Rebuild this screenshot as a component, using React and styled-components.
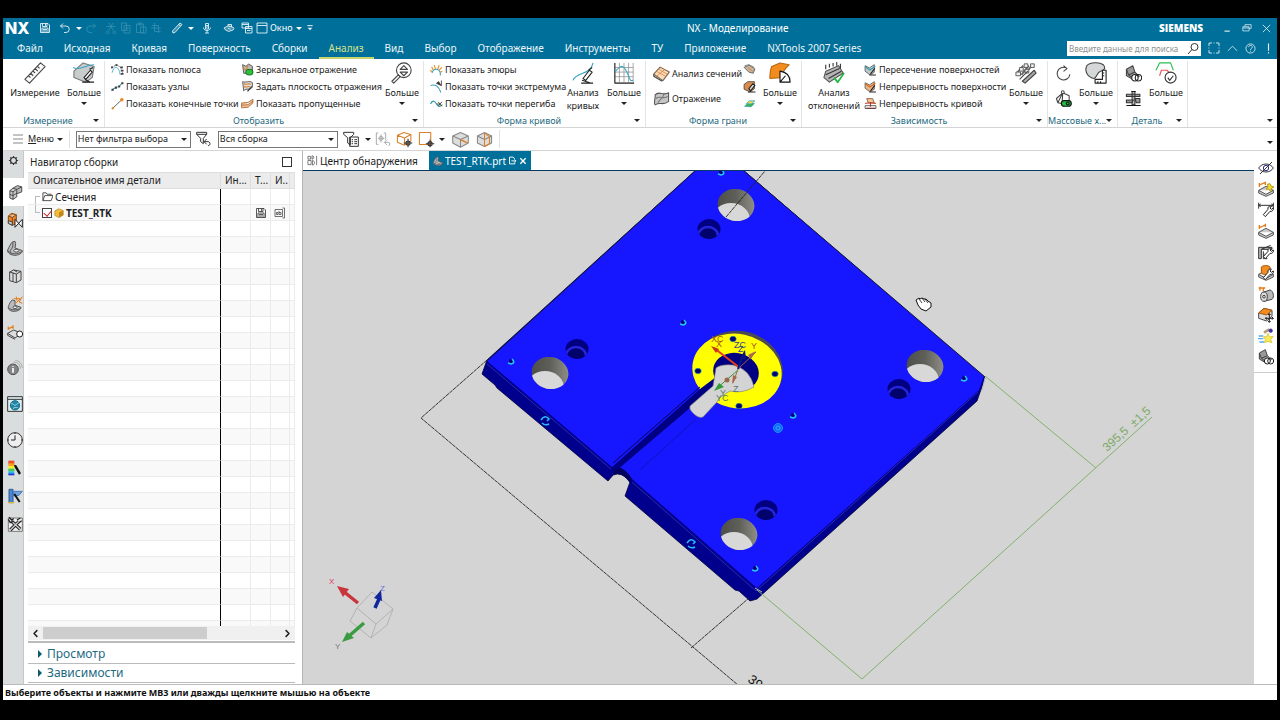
import styled, { createGlobalStyle, css } from 'styled-components';

const GlobalStyle = createGlobalStyle`
  :root {
    --teal: #00709a;
    --tealText: #1d6a80;
    --line: #d4d4d4;
    --scene: #d4d4d4;
  }

  * {
    box-sizing: border-box;
  }

  body {
    margin: 0;
    background: #000;
    color: #222;
    font-family: 'Noto Sans', 'Open Sans', sans-serif;
    font-size: 10px;
    line-height: 14px;
  }

  button,
  input,
  select {
    margin: 0;
    padding: 0;
    border: 0;
    background: none;
    color: inherit;
    font: inherit;
  }

  svg {
    display: block;
    flex: none;
  }
`;

/* ---------- icons ---------- */

const Svg = styled.svg.attrs({ viewBox: '0 0 24 24', fill: 'none', 'aria-hidden': true })`
  width: ${({ $size }) => $size}px;
  height: ${({ $size }) => $size}px;
  stroke: currentColor;
  stroke-width: ${({ $weight }) => $weight || 1.5};
  stroke-linejoin: round;
`;

const Caret = styled.span`
  flex: none;
  width: 0;
  height: 0;
  border: 3px solid transparent;
  border-bottom: 0;
  border-top-color: currentColor;
`;

const wrench = <path d="M11 22l7-8a4 4 0 0 0 5-5l-3 2-2-2 2-3a4 4 0 0 0-5 5l-7 8z" fill="#fff" stroke="#222" />;
const slab = <path d="M1 14l11-6 11 6-11 6zM1 14v4l11 5 11-5v-4" fill="#ccc" stroke="#555" />;
const clamp = (
  <>
    <path d="M2 6l9-5 3 9 6 6-8 5-10-6z" fill="#999" stroke="#444" />
    <path d="M2 6l3 8 8 6M5 14l9-4" stroke="#444" />
    <circle cx="14" cy="18" r="4.5" fill="#fff" stroke="#222" />
    <circle cx="19" cy="18" r="4.5" stroke="#222" />
  </>
);

const shapes = {
  save: <path d="M3 3h15l3 3v15H3zM7 3v6h9V3M13 4v4M6 21v-9h12v9M8 15h8M8 18h8" />,
  undo: <path d="M8 3L3 8l5 5M3 8h11a6 6 0 0 1 0 13h-4" />,
  redo: <path d="M16 3l5 5-5 5M21 8H10a6 6 0 0 0 0 13h4" />,
  cut: <path d="M8 2l8 14M16 2L8 16M3 9h18M8 19a3 3 0 1 1-5 0 3 3 0 0 1 5 0zM21 19a3 3 0 1 1-5 0 3 3 0 0 1 5 0z" />,
  copy: <path d="M3 2h10v15H3zM8 7h12v15H8zM11 12h6M11 16h6" />,
  paste: <path d="M3 4h14v17H3zM7 2h6v4H7zM11 10h11v12H11z" />,
  special: <path d="M9 2v17h12M4 7h13v15M2 12h19" />,
  pen: <path d="M4 22l-1-4L18 2l4 3L8 21zM15 5l4 3" fill="#fff" fillOpacity=".25" />,
  mic: <path d="M9 3h6v11H9zM5 11c0 8 14 8 14 0M12 17v5M8 22h8M9 7h6M9 10h6" />,
  touch: <path d="M2 12l8-4 8 2c4 0 5 4 2 6l-9 3-7-4zM10 8V5h7v5M10 13l5 1" fill="#fff" fillOpacity=".25" />,
  windows: <path d="M2 2h13v10H2zM2 5h13M9 9h13v13H9zM9 13h13M12 17h7" />,
  frame: <path d="M2 2h20v20H2zM2 7h20" />,
  minimize: <path d="M4 19h14" strokeWidth="3" />,
  restore: <path d="M7 8V4h15v9h-5M2 9h15v10H2zM2 12h15" />,
  close: <path d="M4 4l16 16M20 4L4 20" />,
  more: (
    <>
      <path d="M4 5h16" strokeWidth="3" />
      <path d="M5 11h14l-7 8z" fill="currentColor" stroke="none" />
    </>
  ),
  full: <path d="M2 8V2h6M16 2h6v6M22 16v6h-6M8 22H2v-6M2 11v2M22 11v2M11 2h2M11 22h2" />,
  up: <path d="M2 17l10-10 10 10" />,
  help: (
    <>
      <circle cx="12" cy="12" r="10" />
      <path d="M8 9c0-5 8-5 8 0 0 3-4 3-4 6M12 17v2" />
    </>
  ),
  bang: <path d="M12 1v16M12 20v3" strokeWidth="2.5" />,
  search: <path d="M22 8a7 7 0 1 1-14 0 7 7 0 0 1 14 0zM10 13l-8 9" strokeWidth="2" />,
  ruler: <path d="M1 19L18 1l5 4L6 23zM5 15l2 2M7 12l3 3M10 10l2 2M12 7l3 3M15 5l2 2" fill="#fafafa" stroke="#444" strokeWidth="1.2" />,
  solid: (
    <>
      <path d="M1 10l10-9 12 4-2 12-7 5-13-5z" fill="#c9cccc" stroke="#777" />
      <path d="M0 6c8 4 14-3 23-3" stroke="#35a5c5" />
      <path d="M12 17l7-8 2 2-7 8zM10 22h13M13 19l6 3M18 8l4-2" fill="#fff" stroke="#222" />
    </>
  ),
  poles: (
    <>
      <path d="M2 18C5 5 14 3 17 22" stroke="#35a5c5" />
      <path d="M1 9l9-6 8 5 4 12" stroke="#555" strokeDasharray="3 2" />
      <path d="M0 8h4M8 4h4M17 8h5M18 14h5M18 20h5" stroke="#444" strokeWidth="3" />
    </>
  ),
  knots: (
    <>
      <path d="M1 20c5-9 12-2 20-15" stroke="#4c9fb8" strokeWidth="2" />
      <path d="M1 18h4M7 14h4M13 12h4M19 6h4" stroke="#444" strokeWidth="4" />
    </>
  ),
  ends: (
    <>
      <path d="M2 22L21 4" stroke="#444" />
      <circle cx="20" cy="5" r="2.5" fill="#e88b1d" stroke="#e88b1d" />
      <circle cx="3" cy="21" r="1.5" fill="#e88b1d" stroke="#e88b1d" />
    </>
  ),
  mirror: (
    <>
      <path d="M3 3l6 3 5-4 7 4v13H5z" fill="#bbb" stroke="#444" />
      <path d="M3 8l6 5M13 4l-3 8" stroke="#d9822b" strokeWidth="2" />
      <rect x="9" y="12" width="13" height="10" rx="4" fill="#2fc13b" stroke="#0c5e14" />
    </>
  ),
  plane: (
    <>
      <path d="M3 3c6 3 12-3 18 2v8c-4 7-11 1-16 7z" fill="#ddd" stroke="#444" />
      <path d="M5 7c5 3 9-2 13 1M5 12c5 3 9-2 12 1" stroke="#d9822b" strokeWidth="2" />
      <path d="M12 21l8-9" stroke="#222" strokeWidth="2" />
    </>
  ),
  skipped: <path d="M1 11l12-1 9-6v7l-9 8-12 1zM2 15l11-1 9-6" fill="#f2ba83" stroke="#a8683a" />,
  zoom: (
    <>
      <circle cx="14" cy="9" r="8" fill="#fff" stroke="#444" />
      <path d="M10 8l4-4 4 4zM10 11l4 4 4-4z" stroke="#444" strokeWidth="1.2" />
      <path d="M8 14l-7 7 2 2 7-7z" fill="#fff" stroke="#444" />
    </>
  ),
  comb: (
    <>
      <path d="M3 17l-2-4M6 13L3 7M10 11L8 4M14 11l3-7M17 13l5-5M19 17l4-2" stroke="#e88b1d" strokeWidth="2" />
      <path d="M4 18c2-8 12-9 15 0v5" stroke="#3f9db8" strokeWidth="2" />
    </>
  ),
  extreme: (
    <>
      <path d="M1 10c9-2 14 0 19 13" stroke="#3f9db8" strokeWidth="2" />
      <path d="M21 1v10M12 6l8 4-4-7z" fill="#333" stroke="#333" />
    </>
  ),
  inflect: (
    <>
      <path d="M1 13c4-9 8-5 11 0s6 6 11 1" stroke="#2a9b9f" strokeWidth="2" />
      <path d="M12 13h7M15 9l7 8M22 9l-7 8" stroke="#333" />
    </>
  ),
  curve: (
    <>
      <path d="M1 20C5 10 20 15 23 1" stroke="#35a5c5" />
      <path d="M12 18l7-9 3 2-7 9zM10 23h13M11 20l9 3M18 9l4-3" fill="#fff" stroke="#222" />
    </>
  ),
  graph: (
    <>
      <path d="M2 1v22h21M2 6h20M2 11h20M2 16h20M7 1v21M12 1v21M17 1v21M22 1v21" stroke="#8a8a8a" strokeWidth=".8" />
      <path d="M2 1v22h21" stroke="#333" />
      <path d="M2 11c7-9 10-8 14 2s3 7 6 7" stroke="#35a5c5" />
    </>
  ),
  section: (
    <>
      <path d="M1 13L10 3l13 7-9 12z" fill="#f9dcc0" stroke="#7a6048" />
      <path d="M5 9l13 7M8 6l12 7M5 16L17 6" stroke="#e0761a" strokeWidth="1" />
      <path d="M1 13v3l12 7" stroke="#444" />
    </>
  ),
  reflect: (
    <>
      <path d="M3 7c6-7 10 2 19-3v12c-8 7-11 0-19 5-3-4 1-8 0-14z" fill="#c5c5c5" stroke="#555" />
      <path d="M4 12c6-5 11 2 17-3M7 18c4-6 8-7 9-14" stroke="#777" />
    </>
  ),
  faceOne: (
    <>
      <path d="M2 8l9-4 11 7-3 8-8-2z" fill="#c9b5a0" stroke="#555" />
      <path d="M3 5l8-2 10 5" stroke="#777" />
      <path d="M9 9l9 6" stroke="#e0761a" />
    </>
  ),
  faceTwo: (
    <>
      <path d="M2 8l7-5h12v13l-8 6-11-5z" fill="#d98b4c" stroke="#444" />
      <path d="M11 16l7-9 4 3-8 10zM9 22h14" fill="#ddd" stroke="#222" strokeWidth="2" />
    </>
  ),
  faceThree: (
    <>
      <path d="M3 17l6-5h12l-6 6z" fill="#3bb54a" stroke="#3b9fae" />
      <path d="M6 12l6-5h10l-7 6z" fill="#f5d949" stroke="#3bb0c5" />
    </>
  ),
  draft: (
    <>
      <path d="M3 5l9-4 10 2c-7 6-8 10-9 14L1 18c0-6 0-9 2-13z" fill="#f28c1d" stroke="#b86814" />
      <path d="M12 10v12h11c0-7-4-11-11-12zM12 22l6-7" fill="#fff" stroke="#111" />
    </>
  ),
  deviation: (
    <>
      <path d="M3 10l14-6 5 8-15 10-6-5z" fill="#b5b5b5" stroke="#555" />
      <path d="M3 8V3M7 6V2M11 5V1M15 4V0M19 7V2M3 14l15-7M6 18l14-8" stroke="#333" />
      <path d="M12 17l4 5 7-10" stroke="#25b846" strokeWidth="2" />
    </>
  ),
  crossing: (
    <>
      <path d="M2 5l8 4 9-6v14l-8 5-9-7z" fill="#bfc9c9" stroke="#555" />
      <path d="M2 7l9 6 10-7" stroke="#2d9fae" strokeWidth="2" />
      <path d="M12 20l8-10M10 22h12" stroke="#222" strokeWidth="2" />
    </>
  ),
  surface: (
    <>
      <path d="M2 5l8 4 9-6v14l-8 5-9-7z" fill="#e9b685" stroke="#555" />
      <path d="M2 7l9 6 10-7" stroke="#d5691e" strokeWidth="2" />
      <path d="M12 20l8-10M10 22h12" stroke="#222" strokeWidth="2" />
    </>
  ),
  continuity: (
    <>
      <path d="M5 3h11l3 8H8z" fill="#f0c9a0" stroke="#8b4b2b" />
      <path d="M2 12c6-2 12-2 20 0M4 21h17M12 9v9" stroke="#c23a2a" strokeWidth="2" />
      <path d="M2 16h20v5H2z" stroke="#444" />
    </>
  ),
  bolts: (
    <>
      <path d="M2 12l7-8M7 14l8-10M12 12l7-9" stroke="#666" strokeWidth="2" />
      <path d="M1 11h5v4H1zM5 6h4v4H5zM10 2h4v4h-4zM17 2h4v4h-4zM11 8h4v4h-4z" fill="#eee" stroke="#555" strokeWidth="1" />
      <path d="M8 21l13-12 2 3-12 11zM5 19l9-9" fill="#aaa" stroke="#444" />
    </>
  ),
  rotate: <path d="M16 4a9 9 0 1 0 5 9M12 1l5 4-5 4" stroke="#444" />,
  mass: (
    <>
      <path d="M11 4l9 4v13l-16-3zM4 18L2 12l9-8M11 4l-1 14" fill="#fff" stroke="#444" />
      <circle cx="11" cy="3" r="2" fill="#fff" stroke="#444" />
      <rect x="9" y="15" width="14" height="8" rx="4" fill="#25b846" stroke="#111" />
      <circle cx="18" cy="19" r="2" stroke="#111" />
    </>
  ),
  measureBody: (
    <>
      <path d="M2 4C6 0 16 0 20 3c3 4 1 6-3 7s-4 7-7 8C3 17-1 10 2 4z" fill="#d5d8d8" stroke="#444" />
      <path d="M19 9h4v14H11v-4h8z" fill="#fff" stroke="#222" />
      <path d="M19 12h2M19 15h2M14 21v2M17 21v2" stroke="#222" />
    </>
  ),
  clamp,
  caliper: (
    <>
      <path d="M2 6h19v3H2zM10 2h4v19h-4z" fill="#bbb" stroke="#333" />
      <path d="M2 14h10l-3 4H2zM14 12h7v6h-5z" fill="#999" stroke="#333" />
      <path d="M2 22h20M9 2h6" stroke="#111" />
    </>
  ),
  check: (
    <>
      <path d="M1 9l4-8h12l3 8" stroke="#25c04c" />
      <path d="M5 15l2-6h6l4 4" stroke="#e2564c" />
      <circle cx="17" cy="17" r="6" fill="#fff" stroke="#333" />
      <path d="M14 17l2 3 4-5" stroke="#333" />
    </>
  ),
  menu: <path d="M2 4h20M2 12h20M2 20h20" stroke="#888" strokeWidth="2" />,
  funnelBack: <path d="M1 2h15v3l-5 6v8l-4-3v-5L1 5zM1 5h15M16 12l-4 4 4 4M12 16h6c4 0 4 6 0 6" stroke="#333" />,
  funnelList: <path d="M1 2h15v3l-5 5v11l-4-3v-8L1 5zM10 9h13v14H10zM13 13h2M17 13h4M13 16h2M17 16h4M13 19h2M17 19h4" stroke="#333" />,
  crossDim: <path d="M5 3H2v17h3M13 3h3v10M9 5v12M5 11h9M12 11a3 3 0 1 1-6 0 3 3 0 0 1 6 0zM18 13l-4 4 4 4M14 17h6c3 0 3 5 0 5" stroke="#aaa" />,
  boxTarget: (
    <>
      <path d="M2 6l9-4 10 3v9l-9 6-10-4zM2 6l10 4 9-5M12 10v10" stroke="#d9822b" />
      <path d="M17 11v12M11 17h12M20 17a3 3 0 1 1-6 0 3 3 0 0 1 6 0z" stroke="#333" />
    </>
  ),
  rectTarget: (
    <>
      <path d="M2 2h16v17H2z" stroke="#d9822b" />
      <path d="M17 12v11M11 18h12M20 18a3 3 0 1 1-6 0 3 3 0 0 1 6 0z" stroke="#333" />
    </>
  ),
  cubeA: (
    <>
      <path d="M1 7l11-5 11 5v10l-11 6-11-6z" fill="#ddd" stroke="#888" />
      <path d="M1 7l11 5 11-5M12 12v11" stroke="#888" />
      <path d="M12 12l10 5" stroke="#d9822b" strokeWidth="2" />
    </>
  ),
  cubeB: (
    <>
      <path d="M2 7l10-5 10 5v10l-10 5-10-5z" fill="#ddd" stroke="#888" />
      <path d="M2 7l10 5 10-5" stroke="#888" />
      <path d="M12 3v19M12 3l7 5v10l-7 4" stroke="#d9822b" />
    </>
  ),
  gear: (
    <>
      <circle cx="12" cy="12" r="6.5" stroke="#333" strokeWidth="2.5" />
      <path d="M12 2v4M12 18v4M2 12h4M18 12h4M5 5l3 3M16 16l3 3M19 5l-3 3M8 16l-3 3" stroke="#333" strokeWidth="2.5" />
    </>
  ),
  assembly: (
    <>
      <path d="M8 5l7-4 7 2v8l-8 3z" fill="#bbb" stroke="#444" />
      <path d="M3 9l5-4 6 2v12l-6 4-5-2z" fill="#ccc" stroke="#444" />
      <path d="M3 9l5 2 6-4M8 11v12M3 15l5 2 6-4M14 7l8-4" stroke="#444" />
    </>
  ),
  assemblyX: (
    <>
      <path d="M2 6l5-4 7 2v13l-6 3-6-3zM2 6l6 2 6-4M8 8v12" fill="#ee8420" stroke="#7b4b1d" />
      <path d="M2 13l6 2v5l-6-3z" fill="#ccc" stroke="#444" />
      <path d="M12 11v12l11-12v12z" fill="#fff" stroke="#222" />
    </>
  ),
  part: (
    <>
      <path d="M1 15C4 9 5 6 8 3l4-1 1 3-1 7 11 4c0 4-6 7-11 7S0 20 1 15z" fill="#bbb" stroke="#555" />
      <path d="M9 3c-1 4 1 7-2 10s-3 6 1 8M1 16c5 6 15 6 22 1" stroke="#555" />
      <ellipse cx="14" cy="16" rx="4" ry="2" fill="#eee" stroke="#555" />
    </>
  ),
  library: <path d="M4 6l6-3 11 2v13l-7 4-10-3zM4 6l10 3 7-4M14 9v13M9 7v13M10 3l5 3" fill="#ddd" stroke="#444" />,
  partNew: (
    <>
      <path d="M2 16C4 11 5 8 8 6l4 1v7l9 3c0 3-5 6-10 6S1 21 2 16z" fill="#bbb" stroke="#555" />
      <path d="M2 17c4 5 13 5 19 1" stroke="#555" />
      <ellipse cx="12" cy="17" rx="3" ry="2" fill="#eee" stroke="#555" />
      <path d="M10 4h10l-7 7M14 1l1 6M23 1l-5 8 5 2" stroke="#e67c19" />
    </>
  ),
  slabSearch: (
    <>
      <path d="M1 14l9-5 12 5-10 7zM1 14v3l11 6" fill="#ddd" stroke="#444" />
      <path d="M1 8l9-5M2 4v5M9 2v5" stroke="#e67c19" strokeWidth="2" />
      <circle cx="19" cy="15" r="4.5" fill="#fff" stroke="#222" />
    </>
  ),
  info: (
    <>
      <circle cx="9" cy="14" r="8" fill="#858585" stroke="#555" />
      <path d="M9 12v7M9 9v1" stroke="#fff" strokeWidth="2.5" />
      <path d="M10 3c6 0 10 4 10 10M12 0c6 1 11 6 11 12" stroke="#aaa" />
    </>
  ),
  web: (
    <>
      <path d="M1 1h22v22H1z" fill="#dff0f4" stroke="#333" />
      <path d="M1 5h22" stroke="#333" />
      <circle cx="12" cy="14" r="7" fill="#2387a8" stroke="#1e6e8a" />
      <path d="M6 12c4-2 4 4 8 1s2-3 4-2M9 19c2-3 5-1 7-2" stroke="#a7d9e5" />
    </>
  ),
  clock: (
    <>
      <circle cx="12" cy="12" r="11" fill="#eee" stroke="#333" />
      <path d="M12 5v7H6M12 1v2M12 21v2M1 12h2M21 12h2" stroke="#222" />
    </>
  ),
  rainbow: (
    <g stroke="none">
      <path d="M2 1h9v5H2z" fill="#e8502d" />
      <path d="M2 5h9v4H2z" fill="#f9a01d" />
      <path d="M2 9h9v4H2z" fill="#f4f12b" />
      <path d="M2 13h9v4H2z" fill="#3ecb49" />
      <path d="M2 17h9v3H2z" fill="#23b5ee" />
      <path d="M2 20h9v3H2z" fill="#1a3ddb" />
      <path d="M11 7l3 1 7 12-3 2-7-12z" fill="#111" />
    </g>
  ),
  tool: (
    <>
      <path d="M3 2h6v20H3z" fill="#4d86cd" stroke="#2a5b9c" />
      <path d="M10 5h13l-5 6-8 1z" fill="#6ea3df" stroke="#4b7bb8" />
      <path d="M11 9l8 12" stroke="#111" strokeWidth="3" />
      <path d="M2 22h9" stroke="#e6b83a" strokeWidth="2" />
    </>
  ),
  settings: (
    <>
      <path d="M2 3h21v20H2z" fill="#f2f2f2" stroke="#777" />
      <path d="M5 21L18 8M20 20L7 8" stroke="#222" strokeWidth="5" />
      <path d="M5 21L18 8M20 20L7 8" stroke="#ccc" strokeWidth="2" />
      <path d="M3 2l4 4 3-2M2 5l3 5 4-2M15 6l5-3M18 10l4-3" stroke="#222" strokeWidth="2" />
    </>
  ),
  eye: (
    <>
      <path d="M1 12c5-8 17-8 22 0-5 8-17 8-22 0z" fill="#fff" stroke="#333" />
      <circle cx="12" cy="12" r="4" stroke="#2b2b98" />
      <path d="M3 21L21 3" stroke="#333" />
    </>
  ),
  slabStar: (
    <>
      {slab}
      <path d="M2 6l9-4M2 3v6M11 1v5" stroke="#e67c19" strokeWidth="2" />
      <path d="M18 4l2 4 4 1-4 2-1 5-3-4-4 0 3-3-1-4z" fill="#f5dc37" stroke="#b59a12" />
    </>
  ),
  dimension: (
    <>
      <path d="M1 1v9M23 1v9M1 5h22M4 3L1 5l3 2M20 3l3 2-3 2" stroke="#333" />
      {wrench}
    </>
  ),
  slabDim: (
    <>
      {slab}
      <path d="M2 7l9-4M2 3v6M11 1v5" stroke="#e67c19" strokeWidth="2" />
    </>
  ),
  frameWrench: (
    <>
      <path d="M1 5h20v3H5v14H1zM5 8l14-6M8 11v11h6" fill="#bbb" stroke="#333" />
      {wrench}
    </>
  ),
  cylWrench: (
    <>
      {slab}
      <path d="M5 3c3-3 10-3 13 0v9c-3 3-10 3-13 0z" fill="#f28c1d" stroke="#a35710" />
      {wrench}
    </>
  ),
  roll: (
    <>
      <path d="M6 10l12-4c5 1 7 11 3 14l-12 3z" fill="#bbb" stroke="#444" />
      <ellipse cx="9" cy="16" rx="5" ry="7" fill="#ddd" stroke="#444" />
      <circle cx="9" cy="16" r="2" stroke="#444" />
      <path d="M1 3h10M3 1v6M8 8V2" stroke="#e67c19" strokeWidth="2" />
    </>
  ),
  blockMove: (
    <>
      <path d="M1 9l8-7 12 3v9l-8 7-12-4z" fill="#ddd" stroke="#444" />
      <path d="M1 9l8-7 12 3-8 7z" fill="#f28c1d" stroke="#a35710" />
      <path d="M17 10v13M11 17h12M15 12l2-2 2 2M15 21l2 2 2-2M13 15l-2 2 2 2M21 15l2 2-2 2" stroke="#222" />
    </>
  ),
  flyStar: (
    <>
      <path d="M1 12h7M0 16h8M2 21h8" stroke="#58a9e8" strokeWidth="2" />
      <path d="M15 8l2 5h6l-4 4 2 5-6-2-5 2 1-5-3-4h5z" fill="#f8e85a" stroke="#e0cf45" />
      <path d="M9 7l8-5" stroke="#b59b7a" strokeWidth="4" />
      <circle cx="19" cy="4" r="2.5" fill="#3a2da5" stroke="#3a2da5" />
    </>
  ),
  folder: <path d="M2 21V4h7l2 3h9v3M2 21L6 10h18l-4 11z" stroke="#444" />,
  cube: (
    <>
      <path d="M2 7l9-5 11 4v11l-10 6-10-5z" fill="#f3bd38" stroke="#a67a1c" />
      <path d="M12 11l10-5v11l-10 6z" fill="#c48716" stroke="none" />
    </>
  ),
  rename: <path d="M2 5h15v14H2zM5 15v-4h3v4H5M10 8v7h4v-4h-4M17 2h4M21 2v20M17 22h4" stroke="#444" />,
  discover: <path d="M2 3h6v6H2zM11 2c5-1 5 7 0 7zM2 12h7v9H2zM12 12c6 1 6 9 0 10zM21 2v20" stroke="#444" />,
  page: <path d="M14 3H4v18h14v-4M14 3l4 5M9 13h12M17 9l4 4-4 4" strokeWidth="2.5" />,
};

const Icon = ({ name, size = 14, weight }) => (
  <Svg $size={size} $weight={weight}>
    {shapes[name]}
  </Svg>
);

/* ---------- title bar and menu ---------- */

const Page = styled.div`
  height: 100vh;
  padding: 18px 3px 20px;
`;

const Window = styled.div`
  height: 100%;
  display: flex;
  flex-direction: column;
  background: #fff;
`;

const Header = styled.header`
  flex: none;
  background: var(--teal);
  color: #fff;
`;

const TitleRow = styled.div`
  height: 20px;
  display: flex;
  align-items: center;
`;

const Logo = styled.strong`
  width: 33px;
  padding-left: 2px;
  flex: none;
  font-family: Inter, sans-serif;
  font-size: 16px;
  font-weight: 800;
  line-height: 20px;
`;

const QuickBar = styled.div`
  flex: 0 0 54%;
  margin-right: -4px;
  display: flex;
  align-items: center;
`;

const QuickButton = styled.button`
  width: ${({ $width }) => $width}px;
  height: 18px;
  display: flex;
  flex: none;
  align-items: center;
  justify-content: center;
  opacity: ${({ disabled }) => (disabled ? 0.2 : 0.9)};
`;

const QuickSplit = styled.span`
  width: 1px;
  height: 14px;
  margin: 0 1px;
  background: #1b6384;
`;

const WindowMenu = styled.button`
  padding: 0 2px;
  display: flex;
  align-items: center;
  gap: 3px;
  font-size: 9px;
`;

const Title = styled.h1`
  flex: 1;
  margin: 0;
  font-size: 10px;
  font-weight: 400;
`;

const Brand = styled.strong`
  margin-right: 14px;
  font-family: 'Open Sans', sans-serif;
  font-weight: 800;
`;

const WindowButtons = styled.div`
  display: flex;
  margin-right: 2px;
`;

const MenuRow = styled.nav`
  height: 21px;
  padding-left: 4px;
  display: flex;
  align-items: flex-end;
  gap: 1px;
`;

const MenuTab = styled.button`
  height: 20px;
  padding: 0 10px;
  flex: none;
  border-bottom: 2px solid ${({ $active }) => ($active ? '#c9d56a' : 'transparent')};
  color: ${({ $active }) => ($active ? '#d5e08a' : '#eef6f9')};
  font-size: 10px;
`;

const SearchBox = styled.label`
  width: 134px;
  height: 15px;
  margin: 0 3px 3px auto;
  padding: 0 2px;
  display: flex;
  align-items: center;
  background: #fff;
  color: #333;

  input {
    min-width: 0;
    flex: 1;
    outline: none;
    font-size: 8px;
  }

  input::placeholder {
    color: #8f8f8f;
    opacity: 1;
  }
`;

const HeaderTools = styled.div`
  display: flex;
  padding-bottom: 2px;
`;

/* ---------- ribbon ---------- */

const RibbonBar = styled.div`
  flex: none;
  height: 69px;
  display: flex;
  border-bottom: 1px solid var(--line);
`;

const GroupBox = styled.section`
  width: ${({ $width }) => $width}px;
  margin-top: 2px;
  flex: none;
  display: flex;
  flex-direction: column;
  border-right: 1px solid #e4e4e4;
`;

const GroupBody = styled.div`
  height: 52px;
  padding-left: ${({ $pad }) => $pad}px;
  flex: none;
  display: flex;
`;

const GroupCaption = styled.h2`
  margin: 0;
  padding: 1px 5px 0 0;
  flex: none;
  display: flex;
  align-items: center;
  color: #222;
  font-size: 9px;
  font-weight: 400;
  line-height: 13px;

  span:first-child {
    flex: 1;
    color: var(--tealText);
    text-align: center;
    white-space: nowrap;
  }
`;

const BigButton = styled.button`
  width: ${({ $width }) => $width || 38}px;
  margin-left: ${({ $gap }) => $gap || 0}px;
  flex: none;
  display: flex;
  flex-direction: column;
  align-items: center;
  font-size: 9px;
  line-height: 13px;

  svg {
    margin: 1px 0 2px;
  }

  ${Caret} {
    margin-top: 3px;
  }
`;

const Column = styled.div`
  width: ${({ $width }) => $width}px;
  flex: none;
  display: flex;
  flex-direction: column;
`;

const SmallButton = styled.button`
  height: ${({ $tall }) => ($tall ? 25 : 17)}px;
  display: flex;
  align-items: center;
  gap: 2px;
  font-size: 9px;
  white-space: nowrap;
`;

const RibbonEnd = styled.div`
  margin-left: auto;
  padding: 0 4px 5px 0;
  display: flex;
  align-items: flex-end;
`;

const Big = ({ icon, label, second, width, gap }) => (
  <BigButton $width={width} $gap={gap}>
    <Icon name={icon} size={22} weight={1.2} />
    {label}
    {second && <span>{second}</span>}
    {label === 'Больше' && <Caret />}
  </BigButton>
);

const List = ({ width, items }) => (
  <Column $width={width}>
    {items.map(([icon, text]) => (
      <SmallButton key={text}>
        <Icon name={icon} size={13} />
        {text}
      </SmallButton>
    ))}
  </Column>
);

const IconColumn = ({ width, icons, size, names }) => (
  <Column $width={width}>
    {icons.map((icon, i) => (
      <SmallButton key={icon} $tall={icons.length === 2} aria-label={names[i]}>
        <Icon name={icon} size={size} />
      </SmallButton>
    ))}
  </Column>
);

const Group = ({ title, width, pad, children }) => (
  <GroupBox $width={width}>
    <GroupBody $pad={pad}>{children}</GroupBody>
    <GroupCaption>
      <span>{title}</span>
      <Caret />
    </GroupCaption>
  </GroupBox>
);

const Ribbon = () => (
  <RibbonBar>
    <Group title="Измерение" width={102} pad={2}>
      <Big icon="ruler" label="Измерение" width={60} />
      <Big icon="solid" label="Больше" />
    </Group>
    <Group title="Отобразить" width={319} pad={6}>
      <List
        width={130}
        items={[
          ['poles', 'Показать полюса'],
          ['knots', 'Показать узлы'],
          ['ends', 'Показать конечные точки'],
        ]}
      />
      <List
        width={142}
        items={[
          ['mirror', 'Зеркальное отражение'],
          ['plane', 'Задать плоскость отражения'],
          ['skipped', 'Показать пропущенные'],
        ]}
      />
      <Big icon="zoom" label="Больше" />
    </Group>
    <Group title="Форма кривой" width={222} pad={6}>
      <List
        width={134}
        items={[
          ['comb', 'Показать эпюры'],
          ['extreme', 'Показать точки экстремума'],
          ['inflect', 'Показать точки перегиба'],
        ]}
      />
      <Big icon="curve" label="Анализ" second="кривых" />
      <Big icon="graph" label="Больше" gap={3} />
    </Group>
    <Group title="Форма грани" width={156} pad={7}>
      <Column $width={90}>
        <SmallButton $tall>
          <Icon name="section" size={17} />
          Анализ сечений
        </SmallButton>
        <SmallButton $tall>
          <Icon name="reflect" size={17} />
          Отражение
        </SmallButton>
      </Column>
      <IconColumn
        width={18}
        size={13}
        icons={['faceOne', 'faceTwo', 'faceThree']}
        names={['Полутоновая кривизна', 'Анализ грани', 'Выпуклость']}
      />
      <Big icon="draft" label="Больше" />
    </Group>
    <Group title="Зависимость" width={246} pad={2}>
      <Big icon="deviation" label="Анализ" second="отклонений" width={60} />
      <List
        width={143}
        items={[
          ['crossing', 'Пересечение поверхностей'],
          ['surface', 'Непрерывность поверхности'],
          ['continuity', 'Непрерывность кривой'],
        ]}
      />
      <Big icon="bolts" label="Больше" />
    </Group>
    <Group title="Массовые х..." width={70} pad={7}>
      <IconColumn width={22} size={17} icons={['rotate', 'mass']} names={['Обновить', 'Масса']} />
      <Big icon="measureBody" label="Больше" />
    </Group>
    <Group title="Деталь" width={70} pad={7}>
      <IconColumn width={22} size={17} icons={['clamp', 'caliper']} names={['Зазор', 'Толщина']} />
      <Big icon="check" label="Больше" />
    </Group>
    <RibbonEnd>
      <Caret />
    </RibbonEnd>
  </RibbonBar>
);

/* ---------- selection bar ---------- */

const SelectionBar = styled.div`
  flex: none;
  height: 23px;
  padding: 0 4px 0 9px;
  display: flex;
  align-items: center;
  border-bottom: 1px solid var(--line);
`;

const MenuButton = styled.button`
  display: flex;
  align-items: center;
  gap: 3px;
  font-size: 9px;

  svg {
    margin-right: 1px;
  }

  u {
    text-underline-offset: 1px;
  }
`;

const Split = styled.span`
  width: 1px;
  height: 18px;
  margin: 0 6px;
  background: #e0e0e0;
`;

const SelectWrap = styled.div`
  position: relative;
  width: ${({ $width }) => $width}px;

  select {
    width: 100%;
    height: 17px;
    padding: 0 1px;
    display: block;
    appearance: none;
    border: 1px solid #777;
    font-size: 9px;
  }

  ${Caret} {
    position: absolute;
    top: 7px;
    right: 4px;
    pointer-events: none;
  }
`;

const BarButton = styled.button`
  width: ${({ $width }) => $width}px;
  height: 20px;
  display: flex;
  align-items: center;
  justify-content: center;
`;

const EndCaret = styled(Caret)`
  margin: 6px 0 0 auto;
`;

const Filters = () => (
  <SelectionBar>
    <MenuButton>
      <Icon name="menu" size={12} />
      <span>
        <u>М</u>еню
      </span>
      <Caret />
    </MenuButton>
    <Split />
    <SelectWrap $width={115}>
      <select aria-label="Фильтр выбора">
        <option>Нет фильтра выбора</option>
      </select>
      <Caret />
    </SelectWrap>
    <BarButton $width={27} aria-label="Сбросить фильтры">
      <Icon name="funnelBack" size={16} />
    </BarButton>
    <SelectWrap $width={120}>
      <select aria-label="Область выбора">
        <option>Вся сборка</option>
      </select>
      <Caret />
    </SelectWrap>
    <BarButton $width={27} aria-label="Фильтр сведений">
      <Icon name="funnelList" size={16} />
    </BarButton>
    <Caret />
    <BarButton $width={24} aria-label="Отменить выбор" disabled>
      <Icon name="crossDim" size={16} />
    </BarButton>
    <BarButton $width={20} aria-label="Выбор тела">
      <Icon name="boxTarget" size={17} />
    </BarButton>
    <BarButton $width={24} aria-label="Прямоугольник">
      <Icon name="rectTarget" size={17} />
    </BarButton>
    <Caret />
    <BarButton $width={32} aria-label="Ребра">
      <Icon name="cubeA" size={17} />
    </BarButton>
    <BarButton $width={16} aria-label="Грани">
      <Icon name="cubeB" size={17} />
    </BarButton>
    <Split />
    <EndCaret />
  </SelectionBar>
);

/* ---------- resource bar and navigator ---------- */

const Body = styled.main`
  min-height: 0;
  flex: 1;
  display: flex;
`;

const ResourceBar = styled.nav`
  width: 21px;
  flex: none;
  background: #dadddd;
  border-right: 1px solid #c8c8c8;
`;

const ResourceButton = styled.button`
  width: 100%;
  height: 28px;
  margin-top: ${({ $apart }) => ($apart ? 8 : 0)}px;
  padding-left: 3px;
  display: flex;
  align-items: center;
  justify-content: center;

  ${({ $active }) =>
    $active &&
    css`
      width: 21px;
      background: #fff;
    `}

  &:first-child {
    height: 27px;
    padding: 0 0 8px;
  }
`;

const resources = [
  ['gear', 'Настройки', 11],
  ['assembly', 'Навигатор сборки', 15],
  ['assemblyX', 'Навигатор сопряжений', 16],
  ['part', 'Навигатор модели', 16],
  ['library', 'Библиотека', 16],
  ['partNew', 'Повторное использование', 16],
  ['slabSearch', 'Навигатор видов', 16],
  ['info', 'Сведения', 16, true],
  ['web', 'Обозреватель', 16, true],
  ['clock', 'Журнал', 16, true],
  ['rainbow', 'Визуализация', 16],
  ['tool', 'Инструменты обработки', 16],
  ['settings', 'Роли', 16],
];

const Navigator = styled.aside`
  width: 279px;
  padding: 0 7px 0 4px;
  flex: none;
  display: flex;
  flex-direction: column;
  border-right: 1px solid #b5b5b5;
`;

const NavigatorTitle = styled.div`
  height: 21px;
  padding: 0 3px 0 2px;
  flex: none;
  display: flex;
  align-items: center;
  justify-content: space-between;

  h2 {
    margin: 0;
    font-size: 10px;
    font-weight: 400;
  }

  button {
    width: 10px;
    height: 10px;
    border: 1px solid #333;
  }
`;

const TreeArea = styled.div`
  min-height: 0;
  flex: 1;
  overflow: hidden;
`;

const Tree = styled.table`
  width: 100%;
  table-layout: fixed;
  border-collapse: separate;
  border-spacing: 0;

  th {
    height: 17px;
    padding: 0 0 0 5px;
    background: #ececec;
    border: 1px solid #dedede;
    border-left: 0;
    font-size: 10px;
    font-weight: 400;
    line-height: 15px;
    text-align: left;
    white-space: nowrap;
  }

  th:not(:first-child) {
    padding-left: 4px;
  }

  td {
    height: 16px;
    padding: 0;
    border-right: 1px solid #ebebeb;
    border-bottom: 1px solid #ebebeb;
    line-height: 14px;
  }

  td:first-child {
    border-right: 1px solid #000;
  }

  tr:nth-child(even) td {
    background: #f9f9f9;
  }

  td > svg {
    margin: 0 auto;
  }
`;

const TreeNode = styled.div`
  height: 15px;
  padding-left: 14px;
  display: flex;
  align-items: center;
  gap: 2px;
  font-size: 10px;
  font-weight: ${({ $bold }) => ($bold ? 700 : 400)};
  background:
    linear-gradient(#bbb, #bbb) 7px 7px / 5px 1px no-repeat,
    linear-gradient(#bbb, #bbb) 7px ${({ $bold }) => ($bold ? '0 / 1px 8px' : '7px / 1px 8px')} no-repeat;
`;

const TreeCheck = styled.input`
  position: relative;
  width: 10px;
  height: 10px;
  appearance: none;
  border: 1px solid #444;
  background: #fff;

  &:checked::after {
    content: '';
    position: absolute;
    top: 0;
    left: 2px;
    width: 4px;
    height: 6px;
    border: solid #d2232a;
    border-width: 0 1px 1px 0;
    transform: rotate(40deg);
  }
`;

const ScrollBar = styled.div`
  height: 14px;
  flex: none;
  display: flex;
  align-items: center;
  background: #f0f0f0;

  button {
    width: 15px;
    height: 14px;
    display: flex;
    align-items: center;
    justify-content: center;
  }
`;

const ScrollTrack = styled.div`
  flex: 1;

  div {
    width: 69%;
    height: 12px;
    background: #cdcdcd;
  }
`;

const Drawer = styled.button`
  height: 19px;
  padding-left: 10px;
  flex: none;
  display: flex;
  align-items: center;
  gap: 5px;
  border-bottom: 1px solid #bbb;
  color: var(--tealText);
  font-size: 12px;
`;

const DrawerStack = styled.div`
  margin: 1px 0;
  padding-top: 2px;
  flex: none;
  display: flex;
  flex-direction: column;
  border-top: 2px solid #bbb;
`;

const DrawerMark = styled.span`
  border: 4px solid transparent;
  border-left-color: #0b5a70;
  border-right: 0;
`;

const emptyRows = Array.from({ length: 26 }, (_, i) => i);

const AssemblyNavigator = () => (
  <Navigator>
    <NavigatorTitle>
      <h2>Навигатор сборки</h2>
      <button aria-label="Развернуть" />
    </NavigatorTitle>
    <TreeArea>
      <Tree>
        <colgroup>
          <col />
          <col width="30" />
          <col width="20" />
          <col width="19" />
          <col width="5" />
        </colgroup>
        <thead>
          <tr>
            <th>Описательное имя детали</th>
            <th>Ин...</th>
            <th>Т...</th>
            <th>И..</th>
            <th aria-label="Прочее" />
          </tr>
        </thead>
        <tbody>
          <tr>
            <td>
              <TreeNode>
                <Icon name="folder" size={11} weight={2} />
                Сечения
              </TreeNode>
            </td>
            <td />
            <td />
            <td />
            <td />
          </tr>
          <tr>
            <td>
              <TreeNode $bold>
                <TreeCheck type="checkbox" defaultChecked aria-label="TEST_RTK" />
                <Icon name="cube" size={10} />
                TEST_RTK
              </TreeNode>
            </td>
            <td />
            <td>
              <Icon name="save" size={12} />
            </td>
            <td>
              <Icon name="rename" size={12} />
            </td>
            <td />
          </tr>
          {emptyRows.map((row) => (
            <tr key={row}>
              <td />
              <td />
              <td />
              <td />
              <td />
            </tr>
          ))}
        </tbody>
      </Tree>
    </TreeArea>
    <ScrollBar>
      <button aria-label="Влево">
        <Svg $size={9} $weight={4}>
          <path d="M17 3L8 12l9 9" />
        </Svg>
      </button>
      <ScrollTrack>
        <div />
      </ScrollTrack>
      <button aria-label="Вправо">
        <Svg $size={9} $weight={4}>
          <path d="M7 3l9 9-9 9" />
        </Svg>
      </button>
    </ScrollBar>
    <DrawerStack>
      <Drawer>
        <DrawerMark />
        Просмотр
      </Drawer>
      <Drawer>
        <DrawerMark />
        Зависимости
      </Drawer>
    </DrawerStack>
  </Navigator>
);

/* ---------- graphics window ---------- */

const Stage = styled.section`
  min-width: 0;
  flex: 1;
  display: flex;
  flex-direction: column;
`;

const DocTabs = styled.div`
  height: 20px;
  flex: none;
  display: flex;
  border-bottom: 1px solid #073a63;
`;

const DocTab = styled.button`
  height: 19px;
  padding: 0 ${({ $active }) => ($active ? '4px' : '11px 0 4px')};
  display: flex;
  align-items: center;
  gap: 2px;
  background: ${({ $active }) => ($active ? 'var(--teal)' : '#fff')};
  color: ${({ $active }) => ($active ? '#fff' : '#222')};
`;

const Canvas = styled.div`
  min-height: 0;
  flex: 1;
  background: var(--scene);

  > svg {
    width: 100%;
    height: 100%;
  }
`;

const SideTools = styled.nav`
  width: 23px;
  padding-top: 6px;
  flex: none;
`;

const SideList = styled.div`
  padding-bottom: 5px;
  border-bottom: 1px solid #ccc;
`;

const SideButton = styled.button`
  width: 100%;
  height: 21px;
  display: flex;
  align-items: center;
  justify-content: center;
`;

const sideTools = [
  ['eye', 'Скрыть'],
  ['slabStar', 'Новый размер'],
  ['dimension', 'Изменить размер'],
  ['slabDim', 'Размер детали'],
  ['frameWrench', 'Изменить эскиз'],
  ['cylWrench', 'Изменить элемент'],
  ['roll', 'Диаметр'],
  ['blockMove', 'Переместить тело'],
  ['flyStar', 'Быстрое создание'],
  ['clamp', 'Зазор'],
];

const bigHoles = [
  [736, 205],
  [550, 373],
  [925, 366],
  [739, 534],
];

const smallHoles = [
  [709, 229],
  [577, 349],
  [899, 389],
  [766, 510],
];

const marks = [
  [721, 172],
  [683, 322],
  [511, 361],
  [793, 415],
  [964, 378],
  [755, 568],
];

const flangeHoles = [
  [733, 339],
  [698, 371],
  [775, 374],
  [739, 406],
];

const Model = () => (
  <svg viewBox="303 171 951 513" preserveAspectRatio="xMidYMid slice" fill="none" role="img" aria-label="Модель TEST_RTK">
    <defs>
      <linearGradient id="bore" x1="0" x2="1">
        <stop offset="0" stopColor="#4c4c48" />
        <stop offset=".5" stopColor="#5f5f5a" />
        <stop offset="1" stopColor="#92928a" />
      </linearGradient>
      <clipPath id="bigHole">
        <ellipse rx="18.5" ry="16" transform="rotate(12)" />
      </clipPath>
      <clipPath id="smallHole">
        <ellipse rx="11.5" ry="10" />
      </clipPath>
    </defs>

    <path
      d="M696 170L487 360L482 374L495 385L497 388L608 481L613 475Q622 471 630 482L625 496L735 590L739 591L750 601L757 599L977 401L985 378L743 170z"
      fill="#00008c"
      stroke="#00003c"
      strokeWidth=".8"
    />
    <path d="M696 170L487 361L612 467Q624 466 632 479L757 588L979 390L984 376L743 170z" fill="#1616ff" />
    <path d="M487 364L611 469M632 482L756 591L978 392" stroke="#3434bb" strokeWidth=".8" />
    <path d="M487 361L696 170M743 170L985 377" stroke="#16163a" />
    <path d="M982 391L985 378M755 588L762 592" stroke="#bcbccc" />
    <path d="M611 479L616 467Q625 467 632 479L630 483Q622 471 613 475z" fill="#00005e" />

    {bigHoles.map(([x, y]) => (
      <g key={x} transform={`translate(${x} ${y})`} clipPath="url(#bigHole)">
        <path d="M-20-20h40v40h-40z" fill="url(#bore)" />
        <ellipse cx="-5" cy="15" rx="19" ry="17" fill="#d8d8d8" />
      </g>
    ))}
    {smallHoles.map(([x, y]) => (
      <g key={x} transform={`translate(${x} ${y})`} clipPath="url(#smallHole)">
        <path d="M-12-12h24v24h-24z" fill="#000080" />
        <ellipse cx="-1" cy="7" rx="10" ry="9" fill="#02026c" stroke="#2525dd" strokeWidth="2.5" />
      </g>
    ))}

    <ellipse cx="739" cy="369" rx="44" ry="38" fill="#4b4b50" transform="rotate(12 739 369)" />
    <ellipse cx="737" cy="371" rx="45" ry="37" fill="#ff0" transform="rotate(12 737 371)" />
    <ellipse cx="736" cy="372" rx="23" ry="19" fill="#000083" transform="rotate(12 736 372)" />
    <path d="M611 468L700 389L716 377L715 389L691 407L617 470z" fill="#000080" />
    <path d="M613 463L700 387" stroke="#05054c" />
    <path
      d="M716 368Q721 364 733 365Q750 369 754 387Q742 394 730 391Q719 397 717 402L703 417Q698 419 692 412Q689 409 690 406L713 386z"
      fill="#d4d4d4"
      stroke="#777"
      strokeWidth=".6"
    />
    <path d="M695 420L640 470" stroke="#1111a8" strokeWidth=".8" />
    {flangeHoles.map(([x, y]) => (
      <ellipse key={x} cx={x} cy={y} rx="3.2" ry="2.7" fill="#00006e" stroke="#1d98a8" strokeWidth=".6" />
    ))}
    {marks.map(([x, y]) => (
      <g key={x}>
        <circle cx={x} cy={y} r="2" fill="#00007c" />
        <path d={`M${x + 1} ${y - 2}q4 4-1 5l-3-1`} stroke="#24c8f5" strokeWidth="1.5" />
      </g>
    ))}
    <path
      d="M541 420q4-6 8-1l-2 2M542 423q3 3 7 1M687 543q4-6 8-1l-2 2M688 546q3 3 7 1"
      stroke="#28b9fa"
      strokeWidth="1.6"
    />
    <circle cx="778" cy="428" r="4.5" fill="#1468f5" stroke="#1b94ff" />
    <circle cx="778" cy="428" r="2" stroke="#28a9ff" />

    <path d="M487 360L421 418L738 685M691 648L749 598M726 217L765 171" stroke="#222" strokeWidth=".9" strokeDasharray="4 .6" />
    <path d="M985 376L1096 468M1152 417L862 679L757 590" stroke="#83b06c" />
    <g fontFamily="Liberation Sans, sans-serif" fill="#7baa66">
      <text x="1107" y="452" fontSize="12" transform="rotate(-42 1107 452)">
        {'395,5 \u00a0±1,5'}
      </text>
      <text x="747" y="681" fontSize="13" fill="#111" transform="rotate(38 747 681)">
        39
      </text>
    </g>

    {/* work coordinate system */}
    <path d="M714 348L740 368" stroke="#e33b1f" strokeWidth="2" />
    <path d="M711 346l8 3-3 4z" fill="#c7351c" />
    <path d="M738 369L756 352M738 369L733 383" stroke="#9b6748" />
    <path d="M756 351l-8 4 3 4zM732 384l1-9 4 2z" fill="#a7694c" />
    <path d="M738 369L743 355" stroke="#061c82" strokeWidth="2" />
    <path d="M745 350l1 10-6-2z" fill="#08167c" />
    <path d="M738 370L716 389" stroke="#339d3b" />
    <path d="M714 391l5-8 5 4z" fill="#339d3b" />
    <circle cx="727" cy="380" r="2.5" fill="#9b6748" />
    <g fontFamily="Liberation Sans, sans-serif" fontSize="9">
      <g fill="#a8501d">
        <text x="711" y="342">XC</text>
        <text x="716" y="347">X</text>
        <text x="751" y="349">Y</text>
      </g>
      <g fill="#33438a">
        <text x="734" y="348">ZC</text>
        <text x="738" y="352">Z</text>
      </g>
      <g fill="#557b70">
        <text x="716" y="401">YC</text>
        <text x="720" y="396">Y</text>
        <text x="733" y="392">Z</text>
      </g>
    </g>

    {/* view triad */}
    <path d="M357 608L372 592L393 609L387 625L371 638L350 621zM357 608L376 624L393 609M376 624L371 638" stroke="#aaa" strokeWidth=".8" />
    <path d="M358 603L343 591" stroke="#c8363b" strokeWidth="3.5" />
    <path d="M337 586l12 3-6 8z" fill="#c8363b" />
    <path d="M375 608L379 599" stroke="#10259b" strokeWidth="3.5" />
    <path d="M381 590l1 11-8-3z" fill="#10259b" />
    <path d="M364 623L349 636" stroke="#3b9b43" strokeWidth="3.5" />
    <path d="M342 642l5-10 7 6z" fill="#3b9b43" />
    <g fontFamily="Liberation Sans, sans-serif" fontSize="8">
      <text x="329" y="584" fill="#e03a5b">X</text>
      <text x="380" y="591" fill="#6a70d8">Z</text>
      <text x="335" y="649" fill="#777">Y</text>
    </g>

    {/* pan cursor */}
    <path d="M918 305l-2-5 3-2 1 1 2-1 2 1 2 0 2 2 3 2 0 4-5 4-5-2z" fill="#fff" stroke="#111" />
    <path d="M919 299l3 4M922 298l3 4M925 299l3 4" stroke="#111" strokeWidth=".8" />
  </svg>
);

const Status = styled.footer`
  height: 16px;
  padding-left: 2px;
  flex: none;
  border-top: 1px solid #bbb;
  color: #111;
  font-size: 9px;
  font-weight: 700;
  line-height: 16px;
`;

const menus = [
  'Файл',
  'Исходная',
  'Кривая',
  'Поверхность',
  'Сборки',
  'Анализ',
  'Вид',
  'Выбор',
  'Отображение',
  'Инструменты',
  'ТУ',
  'Приложение',
  'NXTools 2007 Series',
];

const Quick = ({ icon, label, width = 18, size = 12, off }) => (
  <QuickButton $width={width} aria-label={label} disabled={off}>
    <Icon name={icon} size={size} weight={1.8} />
  </QuickButton>
);

const App = () => (
  <Page>
    <GlobalStyle />
    <Window>
      <Header>
        <TitleRow>
          <QuickBar>
            <Logo>NX</Logo>
            <Quick icon="save" label="Сохранить" />
            <Quick icon="undo" label="Отменить" width={22} />
            <Caret />
            <Quick icon="redo" label="Повторить" off />
            <QuickSplit />
            <Quick icon="cut" label="Вырезать" width={15} off />
            <Quick icon="copy" label="Копировать" width={15} off />
            <Quick icon="paste" label="Вставить" width={15} off />
            <Quick icon="special" label="Специальная вставка" width={15} off />
            <QuickSplit />
            <Quick icon="pen" label="Измерить" width={22} />
            <Caret />
            <Quick icon="mic" label="Голос" width={26} />
            <Quick icon="touch" label="Сенсорный режим" />
            <Quick icon="windows" label="Переключить окно" />
            <Quick icon="frame" label="Окно" width={12} />
            <WindowMenu>
              Окно
              <Caret />
            </WindowMenu>
            <Quick icon="more" label="Настроить панель" width={12} size={8} />
          </QuickBar>
          <Title>NX - Моделирование</Title>
          <Brand>SIEMENS</Brand>
          <WindowButtons>
            <Quick icon="minimize" label="Свернуть" width={20} size={9} />
            <Quick icon="restore" label="Восстановить" width={20} size={10} />
            <Quick icon="close" label="Закрыть" size={11} />
          </WindowButtons>
        </TitleRow>
        <MenuRow>
          {menus.map((menu) => (
            <MenuTab key={menu} $active={menu === 'Анализ'}>
              {menu}
            </MenuTab>
          ))}
          <SearchBox>
            <input type="text" aria-label="Поиск" placeholder="Введите данные для поиска" />
            <Icon name="search" size={12} />
          </SearchBox>
          <HeaderTools>
            <Quick icon="full" label="Полный экран" />
            <Quick icon="up" label="Свернуть ленту" size={11} />
            <Quick icon="help" label="Справка" size={11} />
            <Quick icon="bang" label="Оповещения" size={11} />
          </HeaderTools>
        </MenuRow>
      </Header>
      <Ribbon />
      <Filters />
      <Body>
        <ResourceBar>
          {resources.map(([icon, label, size, apart]) => (
            <ResourceButton key={icon} $apart={apart} $active={icon === 'assembly'} aria-label={label}>
              <Icon name={icon} size={size} />
            </ResourceButton>
          ))}
        </ResourceBar>
        <AssemblyNavigator />
        <Stage>
          <DocTabs>
            <DocTab>
              <Icon name="discover" size={11} />
              Центр обнаружения
            </DocTab>
            <DocTab $active>
              <Icon name="part" size={10} />
              TEST_RTK.prt
              <Icon name="page" size={9} />
              <Icon name="close" size={8} weight={4} />
            </DocTab>
          </DocTabs>
          <Canvas>
            <Model />
          </Canvas>
        </Stage>
        <SideTools>
          <SideList>
            {sideTools.map(([icon, label]) => (
              <SideButton key={icon} aria-label={label}>
                <Icon name={icon} size={16} />
              </SideButton>
            ))}
          </SideList>
        </SideTools>
      </Body>
      <Status>Выберите объекты и нажмите MB3 или дважды щелкните мышью на объекте</Status>
    </Window>
  </Page>
);

export default App;
